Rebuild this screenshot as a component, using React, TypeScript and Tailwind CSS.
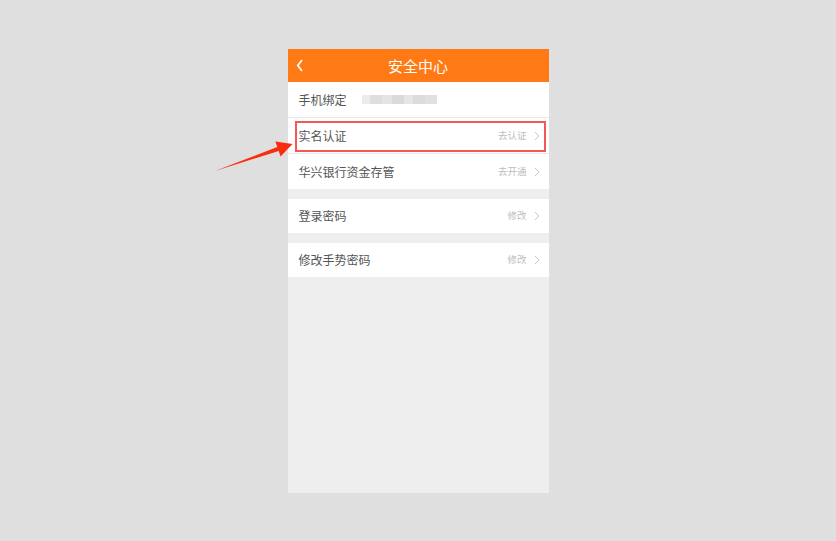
import React from "react";

const Chevron = () => (
  <svg width="6" height="10" viewBox="0 0 6 10" className="ml-[7px]">
    <path d="M1 1 L5 5 L1 9" fill="none" stroke="#c8c8c8" strokeWidth="1" />
  </svg>
);

function Row({
  label,
  right,
  h,
  border,
  children,
}: {
  label: string;
  right?: string;
  h: string;
  border?: boolean;
  children?: React.ReactNode;
}) {
  return (
    <div className={`relative bg-white ${border ? "border-b border-[#e8e8e8]" : ""}`}>
      <div className={`flex items-center pl-[11px] pr-[9px] ${h}`}>
        <span className="text-[12px] text-[#555555] leading-none">{label}</span>
        {children}
        <div className="flex-1" />
        {right && (
          <div className="flex items-center">
            <span className="text-[9.5px] text-[#bdbdbd] leading-none">{right}</span>
            <Chevron />
          </div>
        )}
      </div>
    </div>
  );
}

export default function App() {
  return (
    <div
      className="relative w-[836px] h-[541px] bg-[#dfdfdf] flex justify-center pt-[49px]"
      style={{ fontFamily: '"Noto Sans CJK SC", "Noto Sans", sans-serif' }}
    >
      <div className="w-[261px] h-[444px] bg-[#eeeeee] flex flex-col">
        <div className="relative h-[33px] bg-[#ff7a14] flex items-center justify-center">
          <svg width="8" height="13" viewBox="0 0 8 13" className="absolute left-[8px] top-[10px]">
            <path d="M6 1 L1.8 6.5 L6 12" fill="none" stroke="#ffffff" strokeWidth="1.8" />
          </svg>
          <span className="text-[15px] text-white leading-none">安全中心</span>
        </div>
        <Row label="手机绑定" h="h-[35px]" border>
          <div className="ml-[15px] flex h-[9px] blur-[0.6px]">
            <div className="w-[8px] bg-[#ececec]" />
            <div className="w-[12px] bg-[#dedede]" />
            <div className="w-[10px] bg-[#e4e4e4]" />
            <div className="w-[12px] bg-[#dadada]" />
            <div className="w-[9px] bg-[#e6e6e6]" />
            <div className="w-[12px] bg-[#dcdcdc]" />
            <div className="w-[12px] bg-[#e0e0e0]" />
          </div>
        </Row>
        <div className="relative">
          <Row label="实名认证" right="去认证" h="h-[35px]" border />
          <div className="absolute left-[7px] right-[3px] top-[3px] bottom-[2px] border-2 border-[#f25858]" />
        </div>
        <Row label="华兴银行资金存管" right="去开通" h="h-[35px]" />
        <div className="h-[10px]" />
        <Row label="登录密码" right="修改" h="h-[34px]" />
        <div className="h-[10px]" />
        <Row label="修改手势密码" right="修改" h="h-[34px]" />
      </div>
      <svg className="absolute left-0 top-0" width="836" height="541" viewBox="0 0 836 541">
        <polygon
          points="215,171 277.3,147.1 275.4,141.5 292.5,144 280.6,156.5 278.7,150.9"
          fill="#fa2c10"
        />
      </svg>
    </div>
  );
}
